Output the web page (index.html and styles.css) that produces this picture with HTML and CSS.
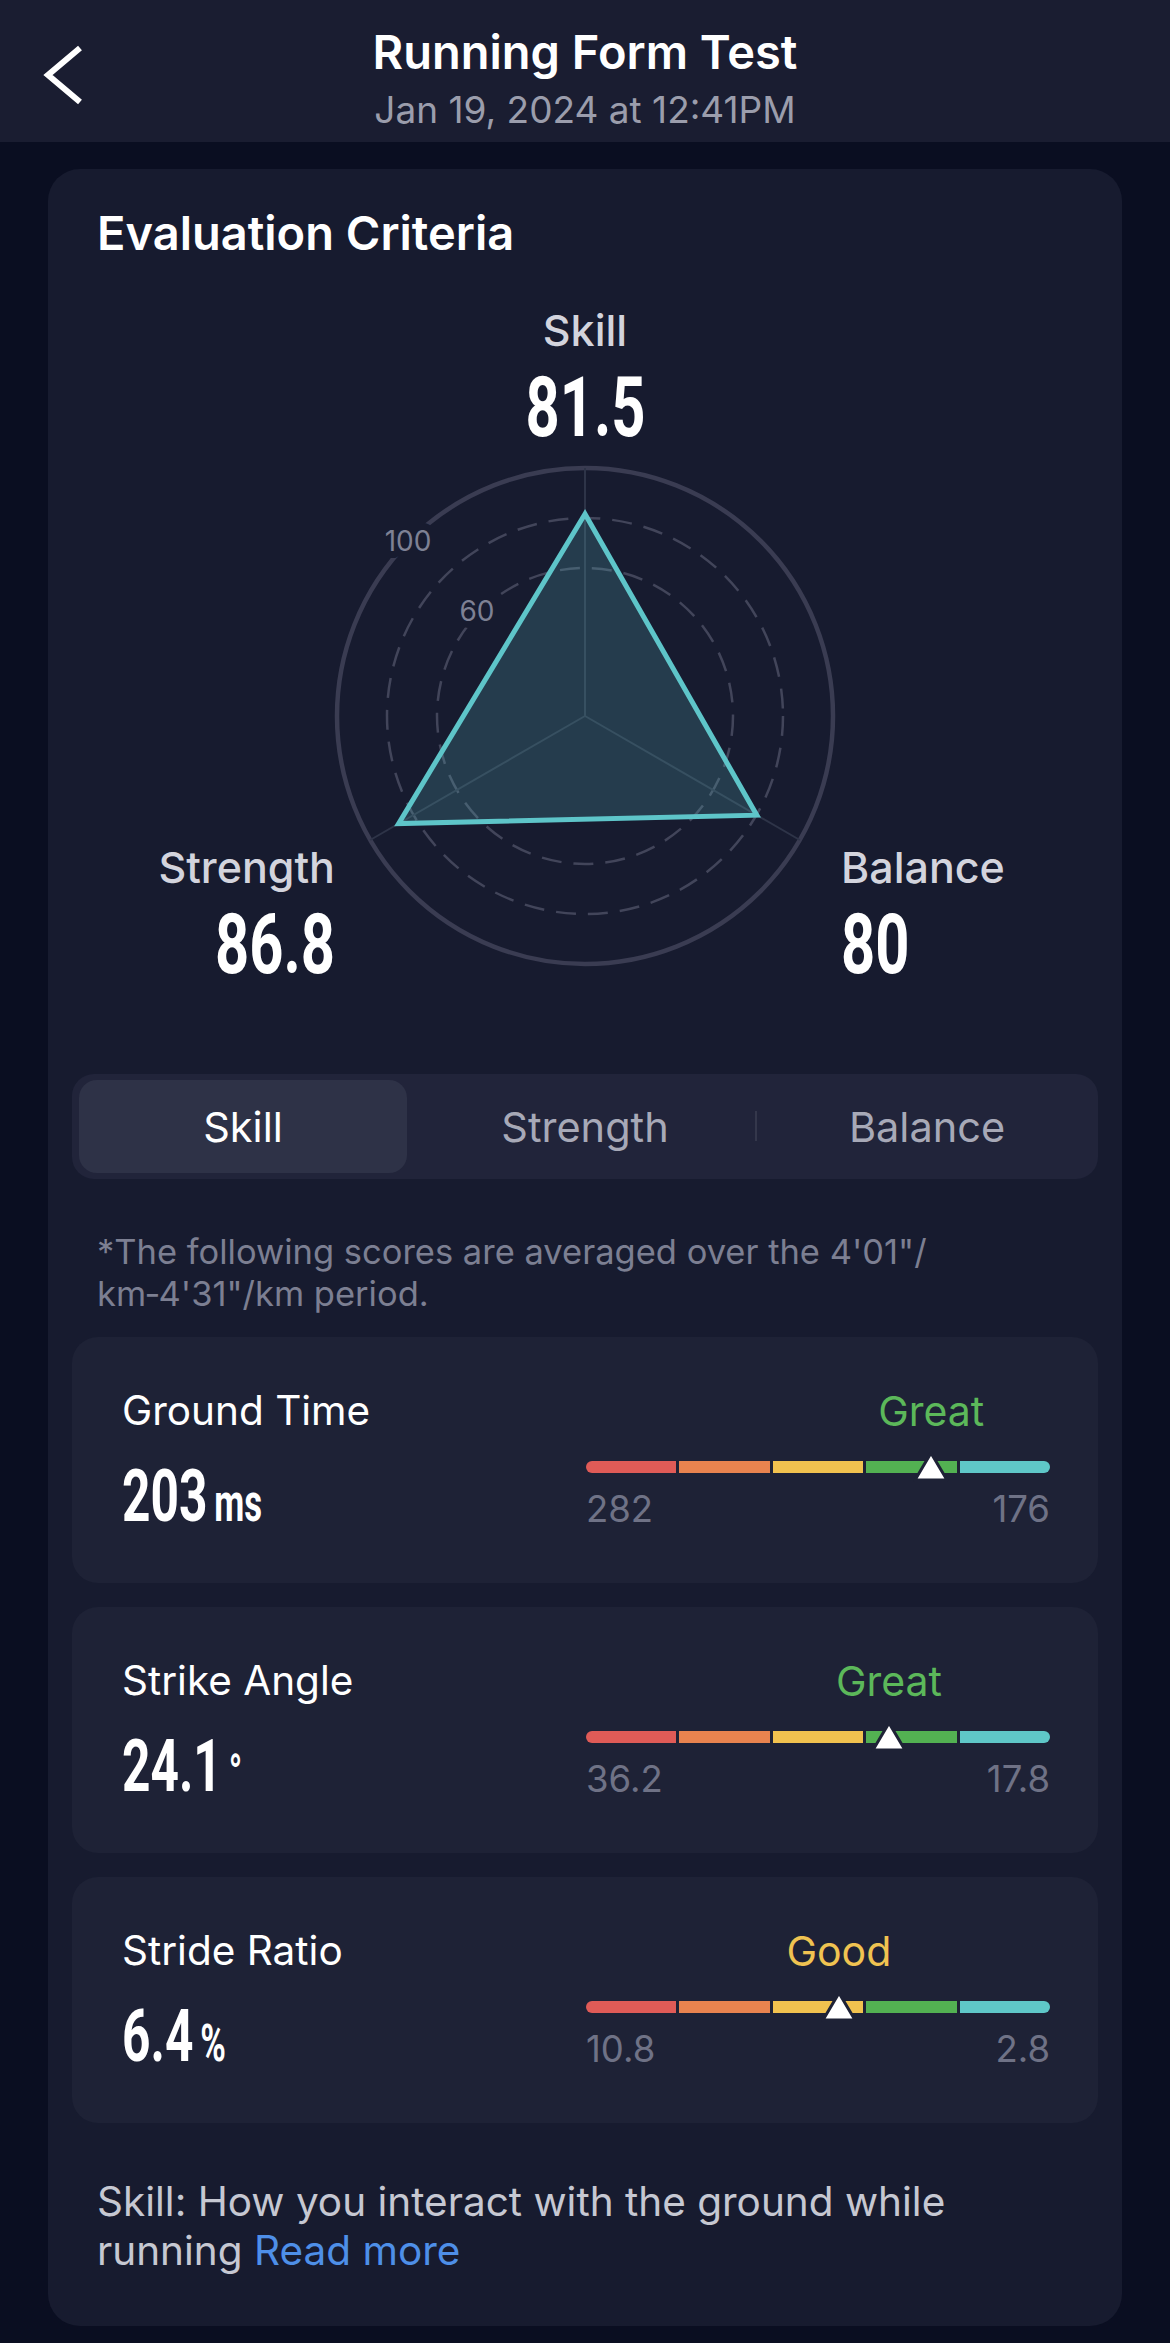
FILE: index.html
```html
<!DOCTYPE html>
<html lang="en">
<head>
    <meta charset="UTF-8">
    <meta name="viewport" content="width=device-width, initial-scale=1.0">
    <title>Running Form Test</title>
    <link rel="stylesheet" href="styles.css">
</head>
<body>

    <header class="topbar">
        <a class="back" href="#" aria-label="Back">
            <svg width="44" height="64" viewBox="0 0 44 64">
                <polyline points="38,5 6,32 38,59" />
            </svg>
        </a>
        <div class="titles">
            <h1>Running Form Test</h1>
            <p class="date">Jan 19, 2024 at 12:41PM</p>
        </div>
    </header>

    <main class="page">
        <section class="card">
            <h2 class="card-title">Evaluation Criteria</h2>

            <div class="radar">
                <div class="axis axis-top">
                    <span class="axis-name">Skill</span>
                    <span class="axis-score">81.5</span>
                </div>

                <div class="radar-plot">
                    <!-- 100 points = r 248 -->
                    <svg class="radar-chart" width="520" height="520" viewBox="-260 -260 520 520">
                        <circle class="ring" r="248" />
                        <circle class="ring-dash" r="198" />
                        <circle class="ring-dash" r="148" />
                        <line class="spoke" x1="0" y1="0" x2="0" y2="-248" />
                        <line class="spoke" x1="0" y1="0" x2="-214.8" y2="124" />
                        <line class="spoke" x1="0" y1="0" x2="214.8" y2="124" />
                        <text class="tick" x="-177" y="-165">100</text>
                        <text class="tick" x="-108" y="-95">60</text>
                        <polygon class="area" points="0,-202 -186.4,107.6 171.8,99.2" />
                    </svg>

                    <div class="axis axis-left">
                        <span class="axis-name">Strength</span>
                        <span class="axis-score">86.8</span>
                    </div>
                    <div class="axis axis-right">
                        <span class="axis-name">Balance</span>
                        <span class="axis-score">80</span>
                    </div>
                </div>
            </div>

            <div class="tabs">
                <div class="tab active">Skill</div>
                <div class="tab">Strength</div>
                <div class="tab">Balance</div>
            </div>

            <p class="note">*The following scores are averaged over the 4'01"/<wbr>km&#8209;4'31"/km period.</p>

            <div class="metrics">
                <div class="metric">
                    <div class="metric-info">
                        <div class="metric-name">Ground Time</div>
                        <div class="metric-value">203<span class="unit">ms</span></div>
                    </div>
                    <div class="gauge" style="--pos: 74.4%">
                        <div class="gauge-rating great"><span>Great</span></div>
                        <div class="gauge-track">
                            <div class="gauge-bar">
                                <i class="seg red"></i><i class="seg orange"></i><i class="seg yellow"></i><i class="seg green"></i><i class="seg teal"></i>
                            </div>
                            <svg class="gauge-marker" width="36" height="32" viewBox="0 0 36 32"><polygon points="18,2 34,29 2,29" /></svg>
                        </div>
                        <div class="gauge-ends"><span>282</span><span>176</span></div>
                    </div>
                </div>

                <div class="metric">
                    <div class="metric-info">
                        <div class="metric-name">Strike Angle</div>
                        <div class="metric-value">24.1<span class="unit">°</span></div>
                    </div>
                    <div class="gauge" style="--pos: 65.3%">
                        <div class="gauge-rating great"><span>Great</span></div>
                        <div class="gauge-track">
                            <div class="gauge-bar">
                                <i class="seg red"></i><i class="seg orange"></i><i class="seg yellow"></i><i class="seg green"></i><i class="seg teal"></i>
                            </div>
                            <svg class="gauge-marker" width="36" height="32" viewBox="0 0 36 32"><polygon points="18,2 34,29 2,29" /></svg>
                        </div>
                        <div class="gauge-ends"><span>36.2</span><span>17.8</span></div>
                    </div>
                </div>

                <div class="metric">
                    <div class="metric-info">
                        <div class="metric-name">Stride Ratio</div>
                        <div class="metric-value">6.4<span class="unit">%</span></div>
                    </div>
                    <div class="gauge" style="--pos: 54.5%">
                        <div class="gauge-rating good"><span>Good</span></div>
                        <div class="gauge-track">
                            <div class="gauge-bar">
                                <i class="seg red"></i><i class="seg orange"></i><i class="seg yellow"></i><i class="seg green"></i><i class="seg teal"></i>
                            </div>
                            <svg class="gauge-marker" width="36" height="32" viewBox="0 0 36 32"><polygon points="18,2 34,29 2,29" /></svg>
                        </div>
                        <div class="gauge-ends"><span>10.8</span><span>2.8</span></div>
                    </div>
                </div>
            </div>

            <p class="about">Skill: How you interact with the ground while running <a href="#">Read more</a></p>
        </section>
    </main>

</body>
</html>
```

FILE: styles.css
```css
* {
    box-sizing: border-box;
    margin: 0;
    padding: 0;
}
body {
    width: 1170px;
    background: #0a0e21;
    color: #fff;
    font-family: "Inter", "Roboto", sans-serif;
}

/* top bar */
.topbar {
    display: grid;
    grid-template-columns: 1fr auto 1fr;
    height: 142px;
    background: #1a1d31;
}
.back {
    display: block;
    width: 44px;
    height: 64px;
    margin: 43px 0 0 42px;
}
.back polyline {
    fill: none;
    stroke: #fff;
    stroke-width: 6;
}
.titles {
    padding-top: 25px;
    text-align: center;
}
.titles h1 {
    font-size: 47px;
    font-weight: 600;
    line-height: 53px;
}
.date {
    margin-top: 11px;
    font-size: 37px;
    line-height: 41px;
    color: #9b9dac;
}

/* main card */
.page {
    padding: 27px 48px 16px;
}
.card {
    background: #171b2f;
    border-radius: 32px;
    padding: 37px 24px 51px;
}
.card-title {
    padding-left: 25px;
    font-size: 47px;
    font-weight: 600;
    line-height: 53px;
}

/* radar chart */
.radar {
    display: flex;
    flex-direction: column;
    align-items: center;
    margin: 0 -24px;
}
.axis {
    display: flex;
    flex-direction: column;
    align-items: center;
}
.axis-top {
    margin-top: 47px;
}
.axis-name {
    font-size: 43px;
    font-weight: 500;
    line-height: 48px;
    color: #d3d4dd;
}
.axis-score {
    margin-top: 12px;
    font-family: "Roboto", sans-serif;
    font-weight: 700;
    font-size: 84px;
    line-height: 84px;
    transform: scaleX(0.71);
}
.radar-plot {
    position: relative;
    width: 100%;
    height: 520px;
    margin-top: 6px;
}
.radar-chart {
    display: block;
    margin: 0 auto;
}
.axis-left {
    position: absolute;
    top: 387px;
    right: calc(50% + 250px);
    align-items: flex-end;
}
.axis-left .axis-score {
    transform-origin: right;
}
.axis-right {
    position: absolute;
    top: 387px;
    left: calc(50% + 256px);
    align-items: flex-start;
}
.axis-right .axis-score {
    transform-origin: left;
}
.ring {
    fill: none;
    stroke: #3a3c52;
    stroke-width: 4.5;
}
.ring-dash {
    fill: none;
    stroke: #42455a;
    stroke-width: 2.5;
    stroke-dasharray: 20 12;
}
.spoke {
    stroke: #2e3448;
    stroke-width: 2;
}
.tick {
    font-family: "Inter", sans-serif;
    font-size: 28px;
    fill: #7e8194;
    text-anchor: middle;
    stroke: #171b2f;
    stroke-width: 14;
    stroke-linejoin: round;
    paint-order: stroke;
}
.area {
    fill: rgba(94, 197, 201, 0.2);
    stroke: #5ec5c9;
    stroke-width: 5;
}

/* segmented tabs */
.tabs {
    display: flex;
    gap: 14px;
    height: 105px;
    margin-top: 98px;
    padding: 6px 7px;
    background: #21243a;
    border-radius: 22px;
}
.tab {
    position: relative;
    flex: 1;
    display: flex;
    align-items: center;
    justify-content: center;
    border-radius: 18px;
    font-size: 41.5px;
    color: #a7a9b7;
}
.tab.active {
    background: #2e3247;
    color: #fff;
}
.tab:not(.active) + .tab:not(.active)::before {
    content: "";
    position: absolute;
    left: -8px;
    top: 31px;
    width: 2px;
    height: 30px;
    background: #34374b;
}

.note {
    margin-top: 52px;
    padding: 0 25px;
    font-size: 34.5px;
    line-height: 42px;
    color: #7c7f92;
}

/* metric rows */
.metrics {
    display: flex;
    flex-direction: column;
    gap: 24px;
    margin-top: 22px;
}
.metric {
    display: flex;
    height: 246px;
    padding: 51px 48px 0 50px;
    background: #1e2236;
    border-radius: 26px;
}
.metric-info {
    flex: 1;
}
.metric-name {
    font-size: 40.5px;
    line-height: 46px;
}
.metric-value {
    width: max-content;
    margin-top: 26px;
    font-family: "Roboto", sans-serif;
    font-weight: 700;
    font-size: 73px;
    line-height: 73px;
    white-space: nowrap;
    transform: scaleX(0.68);
    transform-origin: left;
}
.metric-value .unit {
    margin-left: 10px;
    font-size: 51px;
}

.gauge {
    width: 464px;
    display: flex;
    flex-direction: column;
}
.gauge-rating {
    position: relative;
    height: 46px;
}
.gauge-rating span {
    position: absolute;
    left: var(--pos);
    transform: translateX(-50%);
    font-size: 41px;
    line-height: 46px;
    white-space: nowrap;
}
.great {
    color: #5cb85a;
}
.good {
    color: #f0c351;
}
.gauge-track {
    position: relative;
    margin-top: 27px;
}
.gauge-bar {
    display: flex;
    gap: 3px;
    height: 12px;
}
.seg {
    flex: 1;
}
.seg:first-child {
    border-radius: 6px 0 0 6px;
}
.seg:last-child {
    border-radius: 0 6px 6px 0;
}
.red { background: #e05b57; }
.orange { background: #e8834f; }
.yellow { background: #f1c24f; }
.green { background: #53b152; }
.teal { background: #5fc7c8; }
.gauge-marker {
    position: absolute;
    top: -10px;
    left: var(--pos);
    transform: translateX(-50%);
}
.gauge-marker polygon {
    fill: #fff;
    stroke: #1e2236;
    stroke-width: 3;
    stroke-linejoin: round;
}
.gauge-ends {
    display: flex;
    justify-content: space-between;
    margin-top: 16px;
    font-size: 36.5px;
    line-height: 40px;
    color: #6f7286;
}

.about {
    margin-top: 54px;
    padding: 0 60px 0 25px;
    font-size: 40.5px;
    line-height: 49px;
    color: #c6c8d2;
}
.about a {
    color: #4e8fe8;
    text-decoration: none;
}
```
